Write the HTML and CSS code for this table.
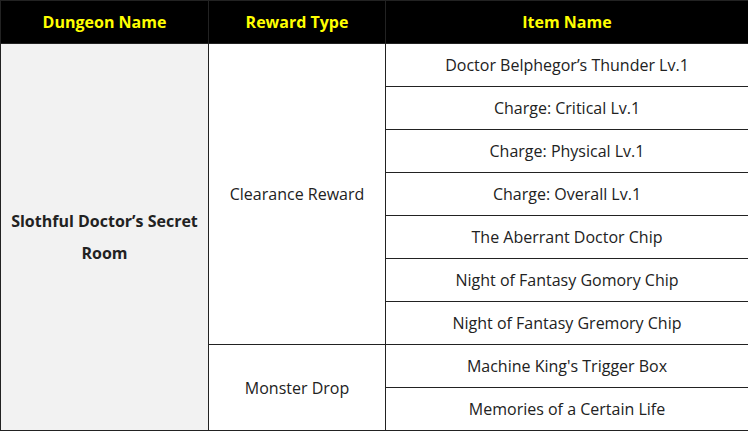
FILE: index.html
```html
<!DOCTYPE html>
<html>
<head>
<meta charset="utf-8">
<link rel="stylesheet" href="styles.css">
</head>
<body>
<table class="drops">
  <colgroup>
    <col class="c1"><col class="c2"><col class="c3">
  </colgroup>
  <thead>
    <tr><th>Dungeon Name</th><th>Reward Type</th><th>Item Name</th></tr>
  </thead>
  <tbody>
    <tr>
      <td rowspan="9" class="dungeon">Slothful Doctor’s Secret Room</td>
      <td rowspan="7">Clearance Reward</td>
      <td>Doctor Belphegor’s Thunder Lv.1</td>
    </tr>
    <tr><td>Charge: Critical Lv.1</td></tr>
    <tr><td>Charge: Physical Lv.1</td></tr>
    <tr><td>Charge: Overall Lv.1</td></tr>
    <tr><td>The Aberrant Doctor Chip</td></tr>
    <tr><td>Night of Fantasy Gomory Chip</td></tr>
    <tr><td>Night of Fantasy Gremory Chip</td></tr>
    <tr>
      <td rowspan="2">Monster Drop</td>
      <td>Machine King's Trigger Box</td>
    </tr>
    <tr><td>Memories of a Certain Life</td></tr>
  </tbody>
</table>
</body>
</html>
```
FILE: styles.css
```css
html, body {
  margin: 0;
  padding: 0;
  background: #fff;
}
.drops {
  width: 748px;
  border-collapse: collapse;
  table-layout: fixed;
  font-family: "Open Sans", "Noto Sans", sans-serif;
  font-size: 16px;
  color: #222;
}
.c1 { width: 208px; }
.c2 { width: 177px; }
.c3 { width: 363px; }
.drops th, .drops td {
  border: 1px solid #222;
  text-align: center;
  vertical-align: middle;
  padding: 0 6px;
  height: 43px;
  box-sizing: border-box;
}
.drops th {
  background: #000;
  color: #ff0;
  font-weight: 700;
}
.drops td.dungeon {
  background: #f2f2f2;
  font-weight: 700;
  line-height: 32px;
}
```
